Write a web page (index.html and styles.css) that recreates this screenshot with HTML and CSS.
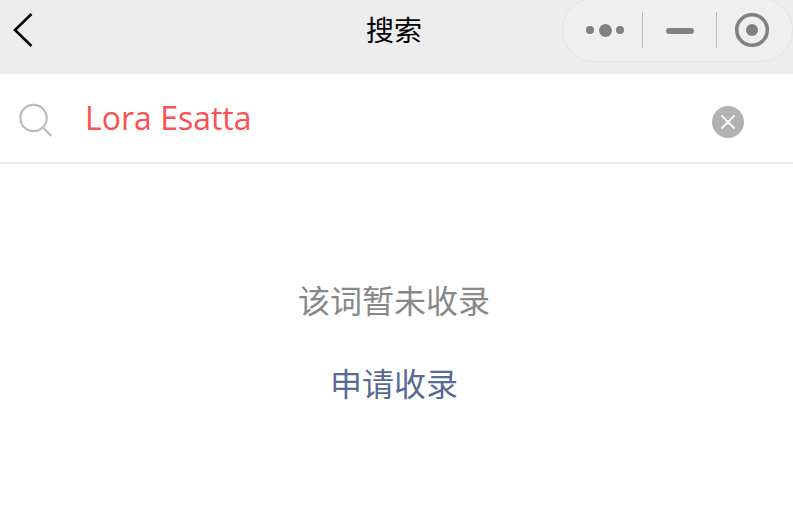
FILE: index.html
```html
<!DOCTYPE html>
<html lang="zh-CN">
<head>
    <meta charset="UTF-8">
    <meta name="viewport" content="width=device-width, initial-scale=1.0">
    <title>搜索</title>
    <link rel="stylesheet" href="styles.css">
</head>
<body>

<!-- Top navigation -->
<header class="nav">
    <button class="nav-back" type="button" aria-label="返回">
        <svg width="24" height="38" viewBox="0 0 24 38">
            <path d="M20.5 3 L4 19 L20.5 35" fill="none" stroke="#000" stroke-width="2.6"/>
        </svg>
    </button>
    <h1 class="nav-title">搜索</h1>
    <div class="capsule">
        <div class="capsule-item capsule-more">
            <span class="dot"></span>
            <span class="dot dot-big"></span>
            <span class="dot"></span>
        </div>
        <div class="capsule-item capsule-min"><span class="dash"></span></div>
        <div class="capsule-item capsule-close">
            <svg width="36" height="36" viewBox="0 0 36 36">
                <circle cx="18" cy="18" r="15.3" fill="none" stroke="#808080" stroke-width="3.6"/>
                <circle cx="18" cy="18" r="6" fill="#808080"/>
            </svg>
        </div>
    </div>
</header>

<!-- Search row -->
<div class="search">
    <svg class="search-icon" width="36" height="36" viewBox="0 0 36 36">
        <circle cx="15.5" cy="15" r="13.2" fill="none" stroke="#bbb" stroke-width="2.2"/>
        <path d="M25 24.5 L33.5 33" fill="none" stroke="#bbb" stroke-width="2.2"/>
    </svg>
    <span class="search-text">Lora Esatta</span>
    <button class="search-clear" type="button" aria-label="清除">
        <svg width="16" height="16" viewBox="0 0 16 16">
            <path d="M1.5 1.5 L14.5 14.5 M14.5 1.5 L1.5 14.5" fill="none" stroke="#fff" stroke-width="1.8"/>
        </svg>
    </button>
</div>

<!-- Empty state -->
<main class="empty">
    <p class="empty-text">该词暂未收录</p>
    <a class="empty-link" href="#">申请收录</a>
</main>

</body>
</html>
```

FILE: styles.css
```css
body {
    margin: 0;
    background: #fff;
    font-family: "Open Sans", "Noto Sans CJK SC", sans-serif;
    overflow: hidden;
}

button {
    padding: 0;
    border: none;
    background: none;
}

/* Navigation bar */
.nav {
    display: grid;
    grid-template-columns: 1fr auto 1fr;
    align-items: center;
    height: 74px;
    background: #ededed;
    overflow: hidden;
}

.nav-back {
    justify-self: start;
    display: flex;
    margin: -14px 0 0 11px;
}

.nav-title {
    margin: -14px 5px 0 0;
    font-size: 28px;
    font-weight: 400;
    line-height: 40px;
    color: #000;
}

/* Capsule buttons */
.capsule {
    justify-self: end;
    align-self: start;
    display: flex;
    box-sizing: border-box;
    width: 231px;
    height: 64px;
    margin-top: -2px;
    padding-top: 2px;
    background: #efefef;
    border: 1px solid #e3e3e3;
    border-radius: 32px;
}

.capsule-item {
    display: flex;
    align-items: center;
    justify-content: center;
    height: 36px;
    margin-top: 11px;
}

.capsule-more {
    gap: 4.5px;
    width: 74px;
    padding-left: 5px;
    border-right: 1px solid #bdbdbd;
}

.capsule-min {
    width: 73px;
    border-right: 1px solid #bdbdbd;
}

.capsule-close {
    flex: 1;
    padding-right: 6px;
}

.dot {
    width: 8px;
    height: 8px;
    border-radius: 50%;
    background: #808080;
}

.dot-big {
    width: 13px;
    height: 13px;
}

.dash {
    width: 28px;
    height: 6px;
    margin-top: 2px;
    border-radius: 3px;
    background: #808080;
}

/* Search row */
.search {
    display: flex;
    align-items: center;
    box-sizing: border-box;
    height: 90px;
    padding: 0 49px 0 18px;
    border-bottom: 2px solid #e8e8e8;
}

.search-icon {
    flex: none;
    margin-top: 6px;
}

.search-text {
    flex: 1;
    margin: -2px 0 0 31px;
    font-size: 32px;
    color: #fa5151;
}

.search-clear {
    display: flex;
    align-items: center;
    justify-content: center;
    width: 32px;
    height: 32px;
    margin-top: 7px;
    border-radius: 50%;
    background: #b2b2b2;
}

/* Empty state */
.empty {
    display: flex;
    flex-direction: column;
    align-items: center;
    padding: 114px 5px 0 0;
}

.empty-text {
    margin: 0 0 37px;
    font-size: 32px;
    line-height: 46px;
    color: #888;
}

.empty-link {
    font-size: 32px;
    line-height: 46px;
    color: #576b95;
    text-decoration: none;
}
```
